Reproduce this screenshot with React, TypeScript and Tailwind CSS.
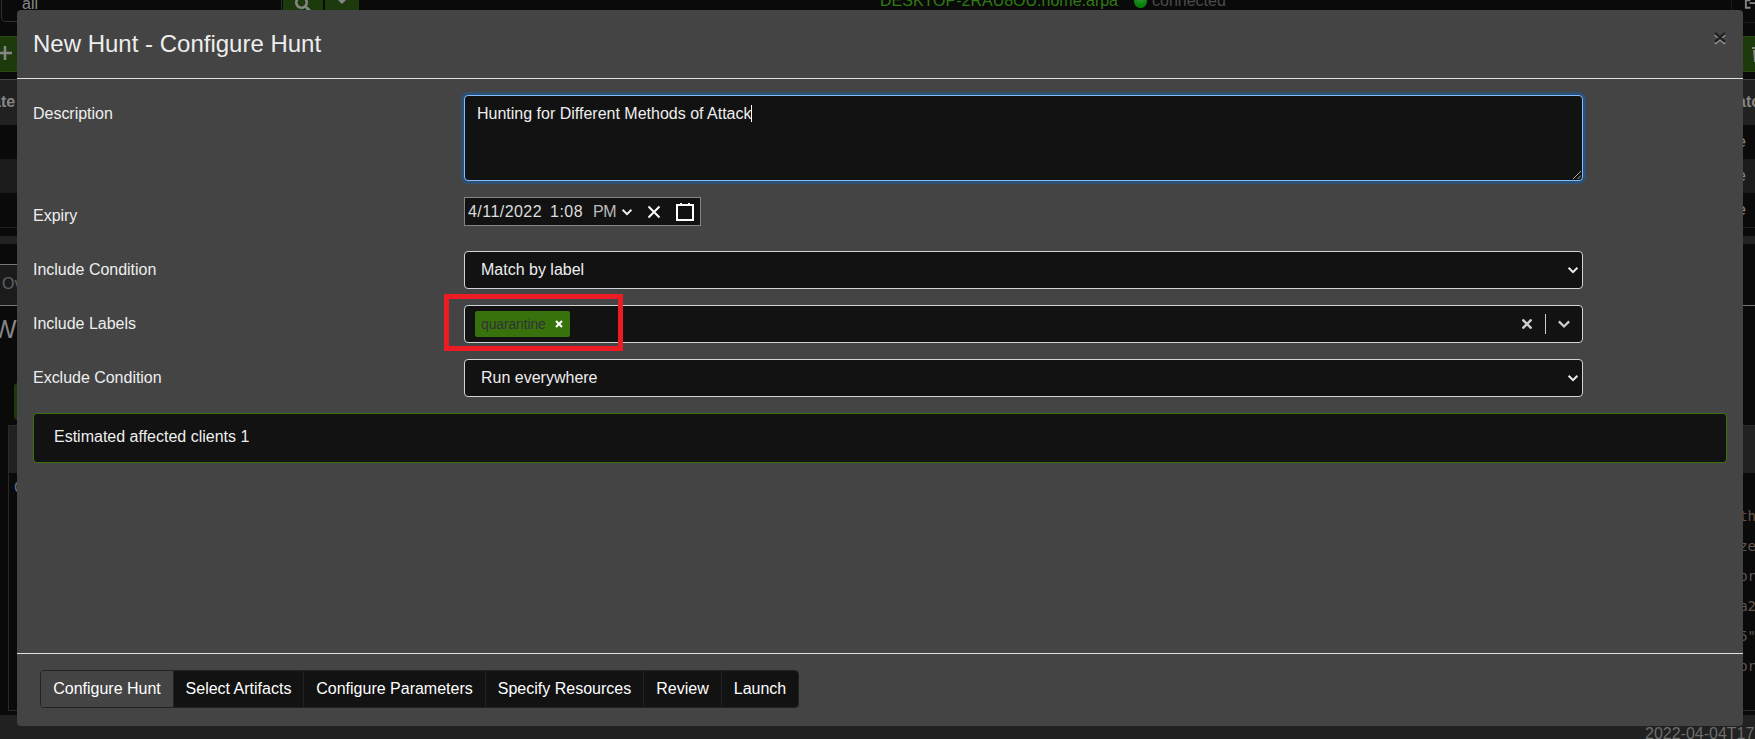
import React from "react";

const rowLabel = "w-[431px] shrink-0 text-[16px] leading-[24px] tracking-[-0.02px]";

function Chevron({ className, size = 12 }: { className?: string; size?: number }) {
  return (
    <svg className={className} width={size} height={size} viewBox="0 0 12 12" fill="none" stroke="currentColor" strokeWidth="2">
      <path d="M1.6 3.7 6 8.1 10.4 3.7" />
    </svg>
  );
}

function Backdrop() {
  const code = ["th", "ze", "or", "a2", '5"', "or"];
  return (
    <div className="flex h-[739px] w-[1755px] flex-col bg-[#0a0a0a] text-[16px] leading-[24px] text-[#868686]">
      <div className="flex h-[23px] shrink-0">
        <div className="-mt-[15px] ml-px h-[37px] w-[281px] rounded-[4px] border border-[#2c3032] pl-5 pt-[6px]">all</div>
        <div className="-mt-[15px] ml-px flex h-[37px] gap-[2px]">
          <div className="flex w-[40px] items-center justify-center bg-[#1c3a0c]">
            <svg width="16" height="16" viewBox="0 0 512 512" fill="currentColor">
              <path d="M505 442.700 405.300 343c-4.500-4.500-10.600-7-17-7H372c27.600-35.300 44-79.700 44-128C416 93.100 322.900 0 208 0S0 93.100 0 208s93.100 208 208 208c48.300 0 92.700-16.400 128-44v16.300c0 6.400 2.500 12.500 7 17l99.700 99.700c9.400 9.400 24.600 9.400 33.900 0l28.300-28.300c9.400-9.400 9.400-24.600.1-34zM208 336c-70.700 0-128-57.200-128-128 0-70.700 57.200-128 128-128 70.700 0 128 57.200 128 128 0 70.700-57.200 128-128 128z" />
            </svg>
          </div>
          <div className="flex w-[34px] items-start justify-center bg-[#1c3a0c] pt-[8px]">
            <svg width="14" height="12" viewBox="0 0 14 12" fill="none" stroke="currentColor" strokeWidth="3.500">
              <path d="M1.500 3 7 8.500 12.500 3" />
            </svg>
          </div>
        </div>
        <div className="-mt-[11px] ml-[521px] w-[238px] text-[#2f7a14]">DESKTOP-2RAU8OU.home.arpa</div>
        <div className="mt-[-5px] ml-[16px] h-[13px] w-[13px] rounded-full bg-[radial-gradient(circle_at_50%_20%,#3c9a3c,#0a830a_60%)]" />
        <div className="-mt-[11px] ml-[5px] text-[#4a4a4a]">connected</div>
        <div className="ml-auto flex h-[23px] w-[24px] border-b border-l border-[#1b1b1b] pl-[12px]">
          <svg width="12" height="10" viewBox="0 0 12 10" fill="none" stroke="currentColor" strokeWidth="2">
            <path d="M7 0H2v8h5M6 3h6" />
          </svg>
        </div>
      </div>
      <div className="mt-[13px] flex h-[36px] shrink-0 justify-between">
        <div className="flex w-[40px] items-center border-y border-[#244a10] bg-[#1c3a0c]">
          <svg className="-mt-[2px] -ml-[2px]" width="14" height="14" viewBox="0 0 14 14" stroke="currentColor" strokeWidth="2.500">
            <path d="M7 0v14M0 7h14" />
          </svg>
        </div>
        <div className="flex w-[40px] items-center justify-end overflow-hidden border-y border-[#244a10] bg-[#1c3a0c]">
          <svg className="-mr-[11px] shrink-0" width="14" height="16" viewBox="0 0 14 16" fill="currentColor">
            <path d="M0 1h4l1-1h4l1 1h4v2H0zM1 4h12l-1 12H2z" />
          </svg>
        </div>
      </div>
      <div className="mt-[7px] flex h-[46px] shrink-0 items-center justify-between overflow-hidden border-t border-[#444444] bg-[#212121] pb-[2px] font-bold">
        <span className="-ml-[8px]">ate</span>
        <span className="-mr-[6px]">ato</span>
      </div>
      {["bg-[#0a0a0a]", "bg-[#1b1b1b]", "bg-[#0a0a0a]"].map((tone, i) => (
        <div key={i} className={`flex h-[34px] shrink-0 items-center justify-end pr-[9px] ${tone}`}>e</div>
      ))}
      <div className="h-[9px] shrink-0 border-t border-[#222222]" />
      <div className="h-[8px] shrink-0 bg-[#222222]" />
      <div className="mt-[20px] flex h-[42px] shrink-0 border-b border-[#777777]">
        <div className="w-[80px] border-t border-[#777777] bg-[#1b1b1b] pl-[2px] pt-[7px] text-[#5d6266]">Overview</div>
      </div>
      <div className="-ml-[7px] mt-[8px] h-[30px] shrink-0 text-[25px] leading-[30px]">W</div>
      <div className="ml-[14px] mt-[39px] h-[37px] w-[60px] shrink-0 rounded-[4px] bg-[#1c3a0c]" />
      <div className="ml-[8px] mt-[5px] flex h-[286px] shrink-0 flex-col overflow-hidden border-y border-l border-[#2a2a2a]">
        <div className="h-[47px] shrink-0 bg-[#212121]" />
        <div className="flex justify-between pl-[5px]">
          <span className="pt-[3px] text-[#5f6f86]">C</span>
          <div className="-mr-[1px] flex flex-col pt-[28px] font-['DejaVu_Sans_Mono',monospace] text-[14px] leading-[30px] text-[#605550]">
            {code.map((text, i) => <span key={i}>{text}</span>)}
          </div>
        </div>
      </div>
      <div className="mt-[4px] flex h-[24px] shrink-0 justify-end overflow-hidden bg-[#212121] pt-[7px] text-[#6e6e6e]">
        <span className="h-[24px] w-[110px] shrink-0 whitespace-nowrap">2022-04-04T17</span>
      </div>
    </div>
  );
}

function Select({ value }: { value: string }) {
  return (
    <div className="flex h-[38px] w-[1119px] items-center justify-between rounded-[4px] border border-[#ced4da] bg-[#121212] pl-[16px] pr-[3px] text-[16px]">
      <span>{value}</span>
      <Chevron />
    </div>
  );
}

export default function App() {
  const steps = [
    { name: "Configure Hunt", width: "w-[132px]" },
    { name: "Select Artifacts", width: "w-[130px]" },
    { name: "Configure Parameters", width: "w-[182px]" },
    { name: "Specify Resources", width: "w-[158px]" },
    { name: "Review", width: "w-[78px]" },
    { name: "Launch", width: "w-[77px]" },
  ];
  return (
    <div className="relative h-[739px] w-[1755px] overflow-hidden font-['Liberation_Sans',Arial,sans-serif]">
      <Backdrop />
      <div className="absolute left-[17px] top-[10px] flex h-[716px] w-[1726px] flex-col rounded-[4px] bg-[#444444] text-[#eeeeee]">
        <header className="flex h-[69px] shrink-0 justify-between border-b border-[#dee2e6] pl-4 pr-[17px]">
          <h1 className="pt-[16px] text-[24px] leading-[36px]">New Hunt - Configure Hunt</h1>
          <svg className="mt-[22px]" width="12" height="13" viewBox="0 0 12 13" fill="none" strokeWidth="2.400">
            <path d="M1 2.500 11 11.500M11 2.500 1 11.500" stroke="#a2a2a2" />
            <path d="M1 1 11 10M11 1 1 10" stroke="#222222" />
          </svg>
        </header>
        <main className="flex h-[574px] shrink-0 flex-col gap-4 px-4 pt-4">
          <div className="flex h-[86px]">
            <div className={`${rowLabel} pt-[7px]`}>Description</div>
            <div className="flex h-[86px] w-[1119px] justify-between rounded-[4px] border border-[#80bdff] bg-[#121212] pl-[12px] pt-[6px] text-[16px] leading-[24px] shadow-[0_0_0_3px_#2f5075]">
              <div className="flex">
                Hunting for Different Methods of Attack
                <span className="-ml-px mt-[3px] h-[17px] w-px bg-white" />
              </div>
              <svg className="mb-px mr-px self-end" width="8" height="8" viewBox="0 0 8 8" stroke="#bbbbbb" strokeWidth="0.900">
                <path d="M0 8 8 0M4.500 8 8 4.500" />
              </svg>
            </div>
          </div>
          <div className="flex h-[38px]">
            <div className={`${rowLabel} pt-[7px]`}>Expiry</div>
            <div className="flex h-[29px] w-[237px] items-center border border-[#858585] bg-[#121212] pl-[3px] text-[16px]">
              <span className="w-[82px] tracking-[0.45px] text-[#dddddd]">4/11/2022</span>
              <span className="w-[43px] tracking-[0.5px] text-[#dddddd]">1:08</span>
              <span className="w-[28px] tracking-[-0.5px] text-[#bbbbbb]">PM</span>
              <Chevron size={12} />
              <svg className="ml-[14px]" width="14" height="14" viewBox="0 0 14 14" stroke="#ffffff" strokeWidth="2">
                <path d="m1.500 1.500 11 11m0-11-11 11" />
              </svg>
              <svg className="-mt-px ml-[15px]" width="18" height="19" viewBox="0 0 18 19" fill="none" stroke="#ffffff" strokeWidth="2">
                <path d="M1 3h16v15H1z" />
                <path d="M5 1v3M13 1v3" />
              </svg>
            </div>
          </div>
          <div className="flex h-[38px]">
            <div className={`${rowLabel} pt-[7px]`}>Include Condition</div>
            <Select value="Match by label" />
          </div>
          <div className="relative flex h-[38px]">
            <div className={`${rowLabel} pt-[7px]`}>Include Labels</div>
            <div className="flex h-[38px] w-[1119px] items-center rounded-[4px] border border-[#ced4da] bg-[#121212] pl-[10px]">
              <div className="flex h-[26px] w-[95px] items-center rounded-[2px] bg-[#37720d] pl-[6px]">
                <span className="w-[74px] pb-px text-[14px] leading-[20px] tracking-[-0.15px] text-[#333333]">quarantine</span>
                <svg width="8" height="8" viewBox="0 0 8 8" stroke="#ffffff" strokeWidth="2">
                  <path d="m1 1 6 6M7 1 1 7" />
                </svg>
              </div>
              <svg className="ml-auto" width="10" height="10" viewBox="0 0 10 10" stroke="#cccccc" strokeWidth="2.400">
                <path d="m.5.5 9 9M9.500.500.500 9.500" />
              </svg>
              <div className="ml-[13px] h-[20px] w-px bg-[#cccccc]" />
              <Chevron size={14} className="ml-[11px] mr-[11px] text-[#cccccc]" />
            </div>
            <div className="absolute -top-[11px] left-[411px] h-[57px] w-[179px] border-[5px] border-[#ed1c24]" />
          </div>
          <div className="flex h-[38px]">
            <div className={`${rowLabel} pt-[7px]`}>Exclude Condition</div>
            <Select value="Run everywhere" />
          </div>
          <div className="h-[50px] rounded-[4px] border border-[#37720d] bg-[#121212] pl-[20px] pt-[11px] text-[16px] leading-[24px]">
            Estimated affected clients 1
          </div>
        </main>
        <footer className="flex h-[73px] border-t border-[#dee2e6] pl-[23px] pt-[16px]">
          <div className="flex h-[38px] overflow-hidden rounded-[4px] border border-[#222222] text-[16px] text-white">
            {steps.map((step, i) => (
              <div
                key={step.name}
                className={`flex items-center justify-center whitespace-nowrap border-[#222222] ${step.width} ${i === 0 ? "bg-[#444444]" : "border-l bg-[#121212]"}`}
              >
                {step.name}
              </div>
            ))}
          </div>
        </footer>
      </div>
    </div>
  );
}
